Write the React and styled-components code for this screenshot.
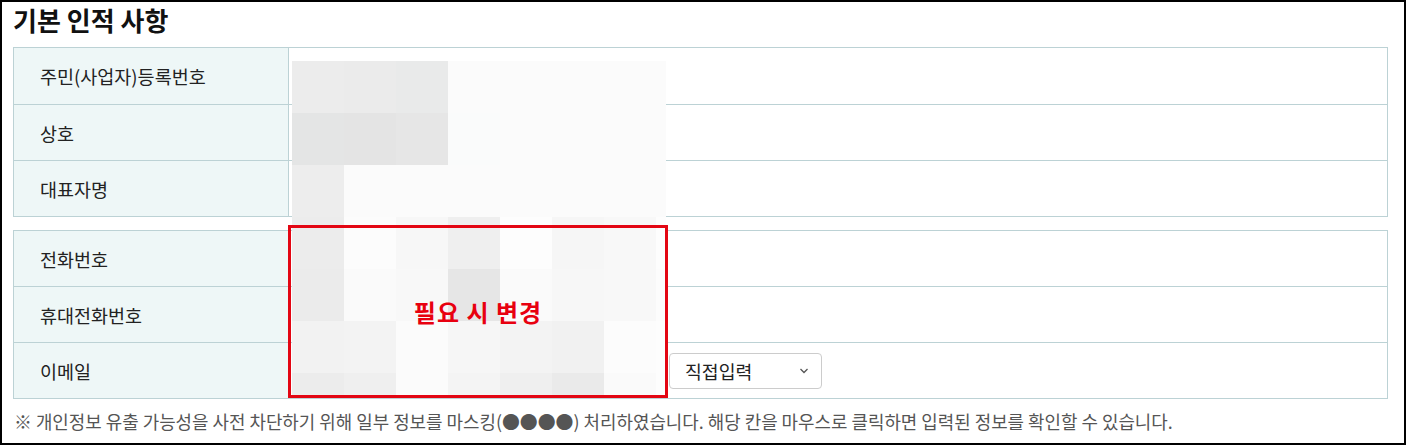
import React from 'react';
import styled, { createGlobalStyle } from 'styled-components';

const GlobalStyle = createGlobalStyle`
  html, body {
    margin: 0;
    padding: 0;
    background: #fff;
  }
  body {
    font-family: "Noto Sans CJK KR", "Noto Sans", sans-serif;
    color: #222;
  }
`;

const Frame = styled.div`
  box-sizing: border-box;
  width: 1406px;
  height: 445px;
  border: 2px solid #000;
  padding: 0 16px 0 11px;
  background: #fff;
`;

const Title = styled.h2`
  margin: 0 0 9px;
  font-size: 26px;
  line-height: 36px;
  font-weight: 700;
  color: #111;
`;

const Tables = styled.div`
  position: relative;
  display: flex;
  flex-direction: column;
  gap: 13px;
`;

const InfoTable = styled.table`
  width: 100%;
  border-collapse: collapse;
  table-layout: fixed;
  border: 1px solid #bcd2d5;
`;

const Row = styled.tr`
  height: ${p => p.$h || 56}px;
`;

const Label = styled.th`
  width: 248px;
  padding: 0 0 0 26px;
  background: #eef7f7;
  border: 1px solid #bcd2d5;
  text-align: left;
  font-size: 18.5px;
  font-weight: 400;
  color: #222;
`;

const Value = styled.td`
  padding: 0 10px;
  border: 1px solid #bcd2d5;
  font-size: 18px;
`;

const EmailGroup = styled.div`
  display: flex;
  align-items: center;
  gap: 10px;
`;

const EmailFields = styled.div`
  width: 360px;
  height: 36px;
`;

const SelectBox = styled.div`
  box-sizing: border-box;
  width: 153px;
  height: 36px;
  display: flex;
  align-items: center;
  justify-content: space-between;
  padding: 0 12px 0 15px;
  border: 1px solid #ccc;
  border-radius: 4px;
  background: #fff;
  font-size: 18.3px;
  color: #222;
`;

const Mosaic = styled.svg`
  position: absolute;
  left: 279px;
  top: 14px;
`;

const Marker = styled.div`
  position: absolute;
  left: 275px;
  top: 178px;
  box-sizing: border-box;
  width: 380px;
  height: 173px;
  border: 3px solid #e30613;
  display: flex;
  align-items: center;
  justify-content: center;
  color: #e8000f;
  font-size: 24px;
  font-weight: 700;
  letter-spacing: 1px;
`;

const Note = styled.p`
  margin: 7px 0 0 1px;
  font-size: 17.9px;
  line-height: 30px;
  color: #555;
`;

// 흐림 처리된 영역 (7열 + 오른쪽 자투리)
const mosaicRows = [
  ['#ececec', '#ebebeb', '#e9eaea', '#fbfbfb', '#fbfbfb', '#fbfbfb', '#fbfbfb', '#fbfbfb'],
  ['#e4e5e5', '#e4e4e4', '#e6e6e6', '#fafbfb', '#fbfbfb', '#fbfbfb', '#fbfbfb', '#fbfbfb'],
  ['#ededed', '#fbfbfb', '#fbfbfb', '#fbfbfb', '#fbfbfb', '#fbfbfb', '#fbfbfb', '#fbfbfb'],
  ['#ececec', '#fcfcfc', '#f7f7f7', '#efefef', '#fdfdfd', '#f6f6f6', '#f8f8f8', '#fdfdfd'],
  ['#ebebeb', '#fafafa', '#f8f8f8', '#e6e6e6', '#fafafa', '#f7f7f7', '#f8f8f8', '#fcfcfc'],
  ['#f2f2f2', '#f3f3f3', '#fbfbfb', '#f6f6f6', '#f3f3f3', '#f1f1f1', '#fcfcfc', '#fdfdfd'],
  ['#ececec', '#efefef', '#fbfbfb', '#f4f4f4', '#efefef', '#eaeaea', '#fafafa', '#fdfdfd'],
];

const MosaicLayer = () => (
  <Mosaic width="374" height="334" viewBox="0 0 374 334">
    {mosaicRows.map((cols, r) =>
      cols.map((c, i) => (
        <rect
          key={`${r}-${i}`}
          x={i * 52}
          y={r * 52}
          width={i === 7 ? 10 : 52}
          height={r === 6 ? 22 : 52}
          fill={c}
        />
      ))
    )}
  </Mosaic>
);

const Chevron = () => (
  <svg width="10" height="6" viewBox="0 0 10 6">
    <polyline points="1.5,1 5,4.5 8.5,1" fill="none" stroke="#555" strokeWidth="1.3" />
  </svg>
);

const basicRows = ['주민(사업자)등록번호', '상호', '대표자명'];
const contactRows = ['전화번호', '휴대전화번호'];

const App = () => (
  <>
    <GlobalStyle />
    <Frame>
      <Title>기본 인적 사항</Title>
      <Tables>
        <InfoTable>
          <tbody>
            {basicRows.map((label, i) => (
              <Row key={label} $h={i === 0 ? 57 : 56}>
                <Label>{label}</Label>
                <Value />
              </Row>
            ))}
          </tbody>
        </InfoTable>
        <InfoTable>
          <tbody>
            {contactRows.map(label => (
              <Row key={label}>
                <Label>{label}</Label>
                <Value />
              </Row>
            ))}
            <Row>
              <Label>이메일</Label>
              <Value>
                <EmailGroup>
                  <EmailFields />
                  <SelectBox>
                    <span>직접입력</span>
                    <Chevron />
                  </SelectBox>
                </EmailGroup>
              </Value>
            </Row>
          </tbody>
        </InfoTable>
        <MosaicLayer />
        <Marker>필요 시 변경</Marker>
      </Tables>
      <Note>
        ※ 개인정보 유출 가능성을 사전 차단하기 위해 일부 정보를 마스킹(●●●●) 처리하였습니다. 해당 칸을 마우스로 클릭하면 입력된 정보를 확인할 수 있습니다.
      </Note>
    </Frame>
  </>
);

export default App;
